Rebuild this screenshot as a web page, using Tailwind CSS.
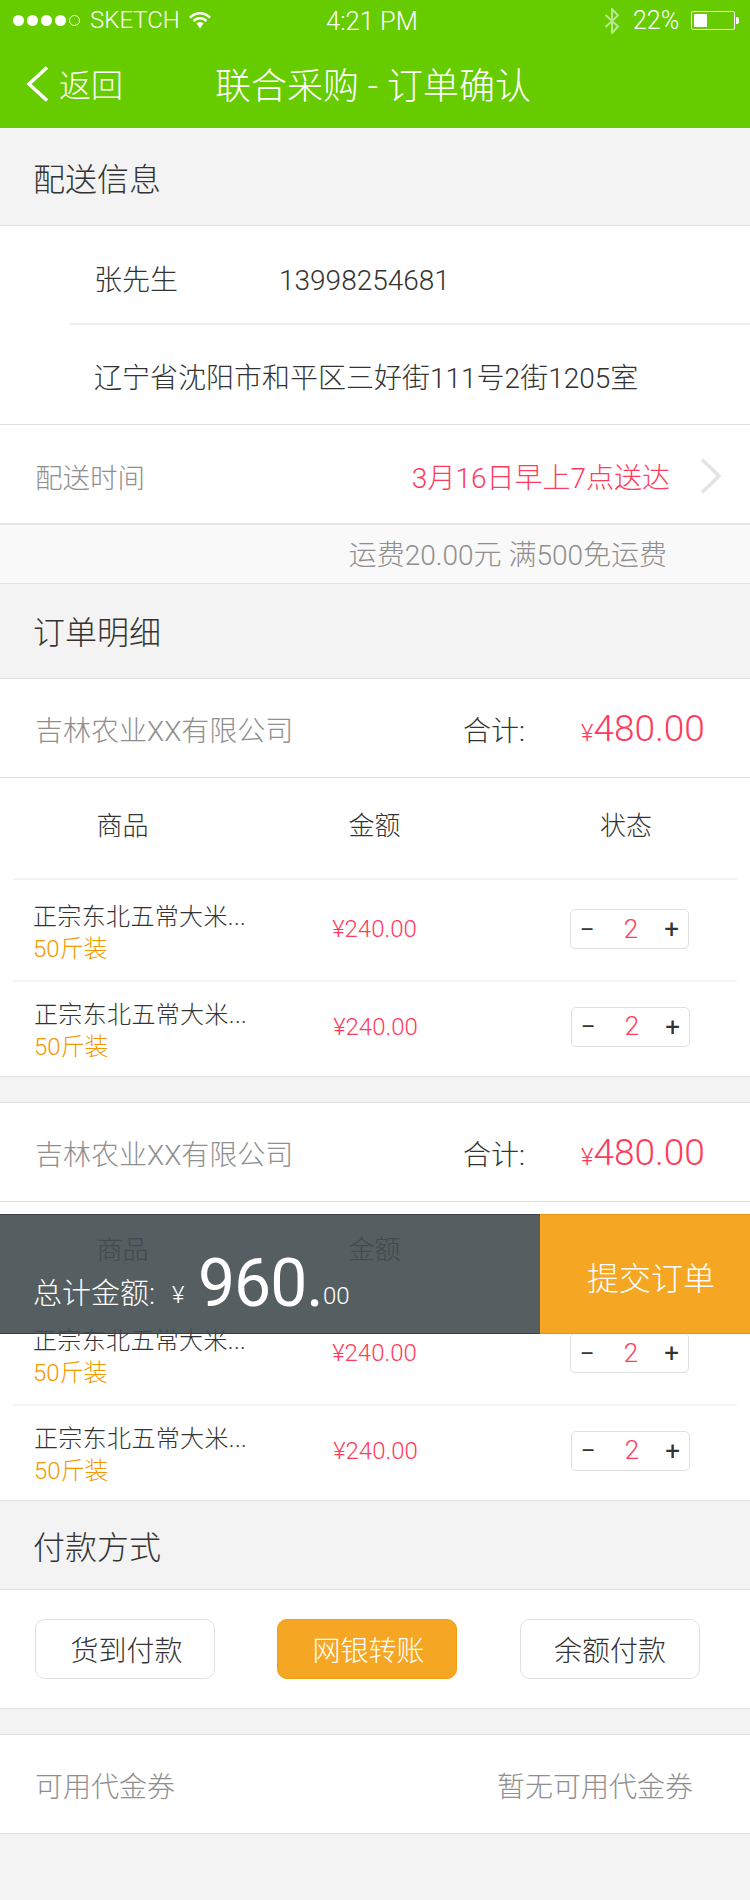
<!DOCTYPE html>
<html lang="zh-CN">
<head>
<meta charset="utf-8">
<script src="https://cdn.jsdelivr.net/npm/@tailwindcss/browser@4"></script>
<title>联合采购 - 订单确认</title>
</head>
<body>
<div class="relative w-[750px] h-[1900px] overflow-hidden bg-[#f3f3f3] text-[#333] font-light font-['Roboto','Noto_Sans_CJK_SC',sans-serif]">

  <header class="bg-[#66cc00] h-[128px] text-white">
    <div class="relative flex items-center h-[40px]">
      <div class="flex items-center gap-[3px] ml-[13px]">
        <span class="size-[11px] rounded-full bg-white"></span>
        <span class="size-[11px] rounded-full bg-white"></span>
        <span class="size-[11px] rounded-full bg-white"></span>
        <span class="size-[11px] rounded-full bg-white"></span>
        <span class="size-[11px] rounded-full border border-white"></span>
      </div>
      <span class="ml-[10px] text-[24px] leading-none">SKETCH</span>
      <svg class="ml-[9px]" width="22" height="18" viewBox="0 0 22 18" fill="none">
        <path d="M1 6.5 C6.5 0.8 15.5 0.8 21 6.5 M4.6 10 C8 6.3 14 6.3 17.4 10" stroke="#fff" stroke-width="2.6"/>
        <path d="M7.5 12.6 C9.5 10.6 12.5 10.6 14.5 12.6 L11 17.5 Z" fill="#fff"/>
      </svg>
      <span class="absolute left-[326px] top-[8px] text-[25.5px] leading-[26px]">4:21 PM</span>
      <svg class="absolute left-[604px] top-[8px]" width="16" height="26" viewBox="0 0 16 26" fill="none">
        <path d="M1.5 7 L14 18.5 L8 25 L8 1 L14 7.5 L1.5 19" stroke="#fff" stroke-opacity="0.55" stroke-width="2"/>
      </svg>
      <span class="absolute left-[633px] top-[9px] text-[25px] leading-[24px]">22%</span>
      <div class="absolute left-[691px] top-[11px] w-[44px] h-[19px] border border-white rounded-[2px] p-[2px]">
        <div class="w-[13px] h-full bg-white"></div>
      </div>
      <div class="absolute left-[736px] top-[17px] w-[3px] h-[7px] bg-white rounded-r-[2px]"></div>
    </div>
    <div class="flex items-center h-[88px] -mt-px pt-[2px]">
      <svg class="ml-[26px]" width="23" height="36" viewBox="0 0 23 36" fill="none">
        <path d="M21 1.5 L3 18 L21 34.5" stroke="#fff" stroke-width="3.5"/>
      </svg>
      <span class="ml-[10px] mt-[3px] text-[32px] leading-none">返回</span>
      <h1 class="ml-[92px] mt-[5px] text-[36px] leading-none font-light">联合采购 - 订单确认</h1>
    </div>
  </header>

  <h2 class="h-[97px] pl-[33px] pt-[6px] flex items-center text-[32px] font-light">配送信息</h2>

  <section class="bg-white border-y border-[#e0e0e0]">
    <div class="ml-[69px] h-[99px] border-b-2 border-[#f0f0f0] flex items-center text-[28px] pl-[25px] pt-[12px]">
      <span class="w-[185px]">张先生</span>
      <span>13998254681</span>
    </div>
    <div class="h-[99px] flex items-center pl-[94px] pt-[8px] text-[28px]">辽宁省沈阳市和平区三好街111号2街1205室</div>
    <div class="h-[99px] border-t border-[#e0e0e0] flex items-center pl-[35px] pr-[28px] pt-[4px] text-[27.5px]">
      <span class="text-[#8f8f8f] mt-[6px]">配送时间</span>
      <span class="ml-auto mt-[6px] text-[28px] text-[#ff3b5c]">3月16日早上7点送达</span>
      <svg class="ml-[30px]" width="22" height="36" viewBox="0 0 22 36" fill="none">
        <path d="M2 1.5 L19 18 L2 34.5" stroke="#e4e4e4" stroke-width="3.5"/>
      </svg>
    </div>
    <div class="h-[60px] border-t-2 border-[#e4e4e4] bg-[#f9f9f9] flex items-center justify-end pr-[83px] pt-[4px] text-[28px] text-[#8f8f8f]">运费20.00元 满500免运费</div>
  </section>

  <h2 class="h-[94px] pl-[33px] pt-[4px] flex items-center text-[32px] font-light">订单明细</h2>

  <section class="bg-white border-y border-[#e0e0e0]">
    <div class="h-[99px] border-b border-[#e0e0e0] flex items-center pl-[35px] pt-[8px]">
      <span class="w-[428px] text-[28px] text-[#8f8f8f]">吉林农业XX有限公司</span>
      <span class="w-[118px] text-[28px]">合计:</span>
      <span class="text-[#ff3b5c] text-[37px] leading-none -mt-[7px]"><span class="text-[24px]">¥</span>480.00</span>
    </div>
    <div class="grid grid-cols-[245px_259px_244px] h-[100px] pb-[3px] items-center text-center text-[26px]">
      <span>商品</span><span>金额</span><span>状态</span>
    </div>
    <div class="mx-[13px] h-[102px] pb-[2px] border-t-2 border-[#f3f3f3] grid grid-cols-[232px_259px_1fr] items-center">
      <div class="self-start pt-[21px] pl-[20px] text-[24px] leading-[32px] tracking-[0.35px] whitespace-nowrap">
        <p>正宗东北五常大米...</p>
        <p class="text-[#f39800] tracking-normal">50斤装</p>
      </div>
      <span class="text-center text-[24px] text-[#ff3b5c]">¥240.00</span>
      <div class="ml-[66px] w-[119px] h-[40px] border border-[#e0e0e0] rounded-[5px] flex items-center justify-between px-[9px]">
        <span class="text-[22px] font-normal">–</span>
        <span class="text-[26px] text-[#ff3b5c] ml-[3px]">2</span>
        <span class="text-[26px] leading-none font-normal">+</span>
      </div>
    </div>
    <div class="mx-[13px] h-[96px] pb-[5px] border-t-2 border-[#f3f3f3] grid grid-cols-[232px_259px_1fr] items-center">
      <div class="self-start pt-[17px] pl-[21px] text-[24px] leading-[32px] tracking-[0.35px] whitespace-nowrap">
        <p>正宗东北五常大米...</p>
        <p class="text-[#f39800] tracking-normal">50斤装</p>
      </div>
      <span class="text-center text-[24px] text-[#ff3b5c] pl-[2px]">¥240.00</span>
      <div class="ml-[67px] w-[119px] h-[40px] border border-[#e0e0e0] rounded-[5px] flex items-center justify-between px-[9px]">
        <span class="text-[22px] font-normal">–</span>
        <span class="text-[26px] text-[#ff3b5c] ml-[3px]">2</span>
        <span class="text-[26px] leading-none font-normal">+</span>
      </div>
    </div>
  </section>

  <section class="mt-[25px] bg-white border-y border-[#e0e0e0]">
    <div class="h-[99px] border-b border-[#e0e0e0] flex items-center pl-[35px] pt-[8px]">
      <span class="w-[428px] text-[28px] text-[#8f8f8f]">吉林农业XX有限公司</span>
      <span class="w-[118px] text-[28px]">合计:</span>
      <span class="text-[#ff3b5c] text-[37px] leading-none -mt-[7px]"><span class="text-[24px]">¥</span>480.00</span>
    </div>
    <div class="grid grid-cols-[245px_259px_244px] h-[100px] pb-[3px] items-center text-center text-[26px]">
      <span>商品</span><span>金额</span><span>状态</span>
    </div>
    <div class="mx-[13px] h-[102px] pb-[2px] border-t-2 border-[#f3f3f3] grid grid-cols-[232px_259px_1fr] items-center">
      <div class="self-start pt-[21px] pl-[20px] text-[24px] leading-[32px] tracking-[0.35px] whitespace-nowrap">
        <p>正宗东北五常大米...</p>
        <p class="text-[#f39800] tracking-normal">50斤装</p>
      </div>
      <span class="text-center text-[24px] text-[#ff3b5c]">¥240.00</span>
      <div class="ml-[66px] w-[119px] h-[40px] border border-[#e0e0e0] rounded-[5px] flex items-center justify-between px-[9px]">
        <span class="text-[22px] font-normal">–</span>
        <span class="text-[26px] text-[#ff3b5c] ml-[3px]">2</span>
        <span class="text-[26px] leading-none font-normal">+</span>
      </div>
    </div>
    <div class="mx-[13px] h-[96px] pb-[5px] border-t-2 border-[#f3f3f3] grid grid-cols-[232px_259px_1fr] items-center">
      <div class="self-start pt-[17px] pl-[21px] text-[24px] leading-[32px] tracking-[0.35px] whitespace-nowrap">
        <p>正宗东北五常大米...</p>
        <p class="text-[#f39800] tracking-normal">50斤装</p>
      </div>
      <span class="text-center text-[24px] text-[#ff3b5c] pl-[2px]">¥240.00</span>
      <div class="ml-[67px] w-[119px] h-[40px] border border-[#e0e0e0] rounded-[5px] flex items-center justify-between px-[9px]">
        <span class="text-[22px] font-normal">–</span>
        <span class="text-[26px] text-[#ff3b5c] ml-[3px]">2</span>
        <span class="text-[26px] leading-none font-normal">+</span>
      </div>
    </div>
  </section>

  <h2 class="h-[88px] pl-[33px] pt-[6px] flex items-center text-[32px] font-light">付款方式</h2>

  <section class="h-[120px] bg-white border-y border-[#e0e0e0] flex items-center pl-[35px] text-[28px]">
    <button class="w-[180px] h-[60px] border border-[#e0e0e0] rounded-[10px] pl-[3px] pt-[5px]">货到付款</button>
    <button class="ml-[62px] w-[180px] h-[60px] rounded-[10px] border border-[#f39c12] bg-[#f5a623] text-white pl-[3px] pt-[5px]">网银转账</button>
    <button class="ml-[63px] w-[180px] h-[60px] border border-[#e0e0e0] rounded-[10px] pt-[5px]">余额付款</button>
  </section>

  <section class="mt-[25px] h-[100px] bg-white border-y border-[#e0e0e0] flex items-center justify-between pl-[35px] pr-[57px] pt-[8px] text-[28px] text-[#8f8f8f]">
    <span>可用代金券</span>
    <span>暂无可用代金券</span>
  </section>

  <div class="absolute left-0 top-[1214px] w-[750px] h-[120px] flex">
    <div class="relative w-[540px] bg-[#434c4f]/90 border-y border-[#3a4144] text-white">
      <span class="absolute left-[33px] top-[62px] text-[29px] leading-[34px]">总计金额:</span>
      <span class="absolute left-[172px] top-[63px] text-[24px] leading-[34px]">¥</span>
      <span class="absolute left-[198px] top-[34px] text-[66px] leading-[70px] tracking-[-1px] font-normal">960.</span>
      <span class="absolute left-[323px] top-[64px] text-[24px] leading-[34px]">00</span>
    </div>
    <div class="w-[210px] bg-[#f5a623] border-y border-[#e8960c] flex items-center justify-center text-[32px] text-white pl-[12px] pt-[10px]">提交订单</div>
  </div>
</div>
</body>
</html>
